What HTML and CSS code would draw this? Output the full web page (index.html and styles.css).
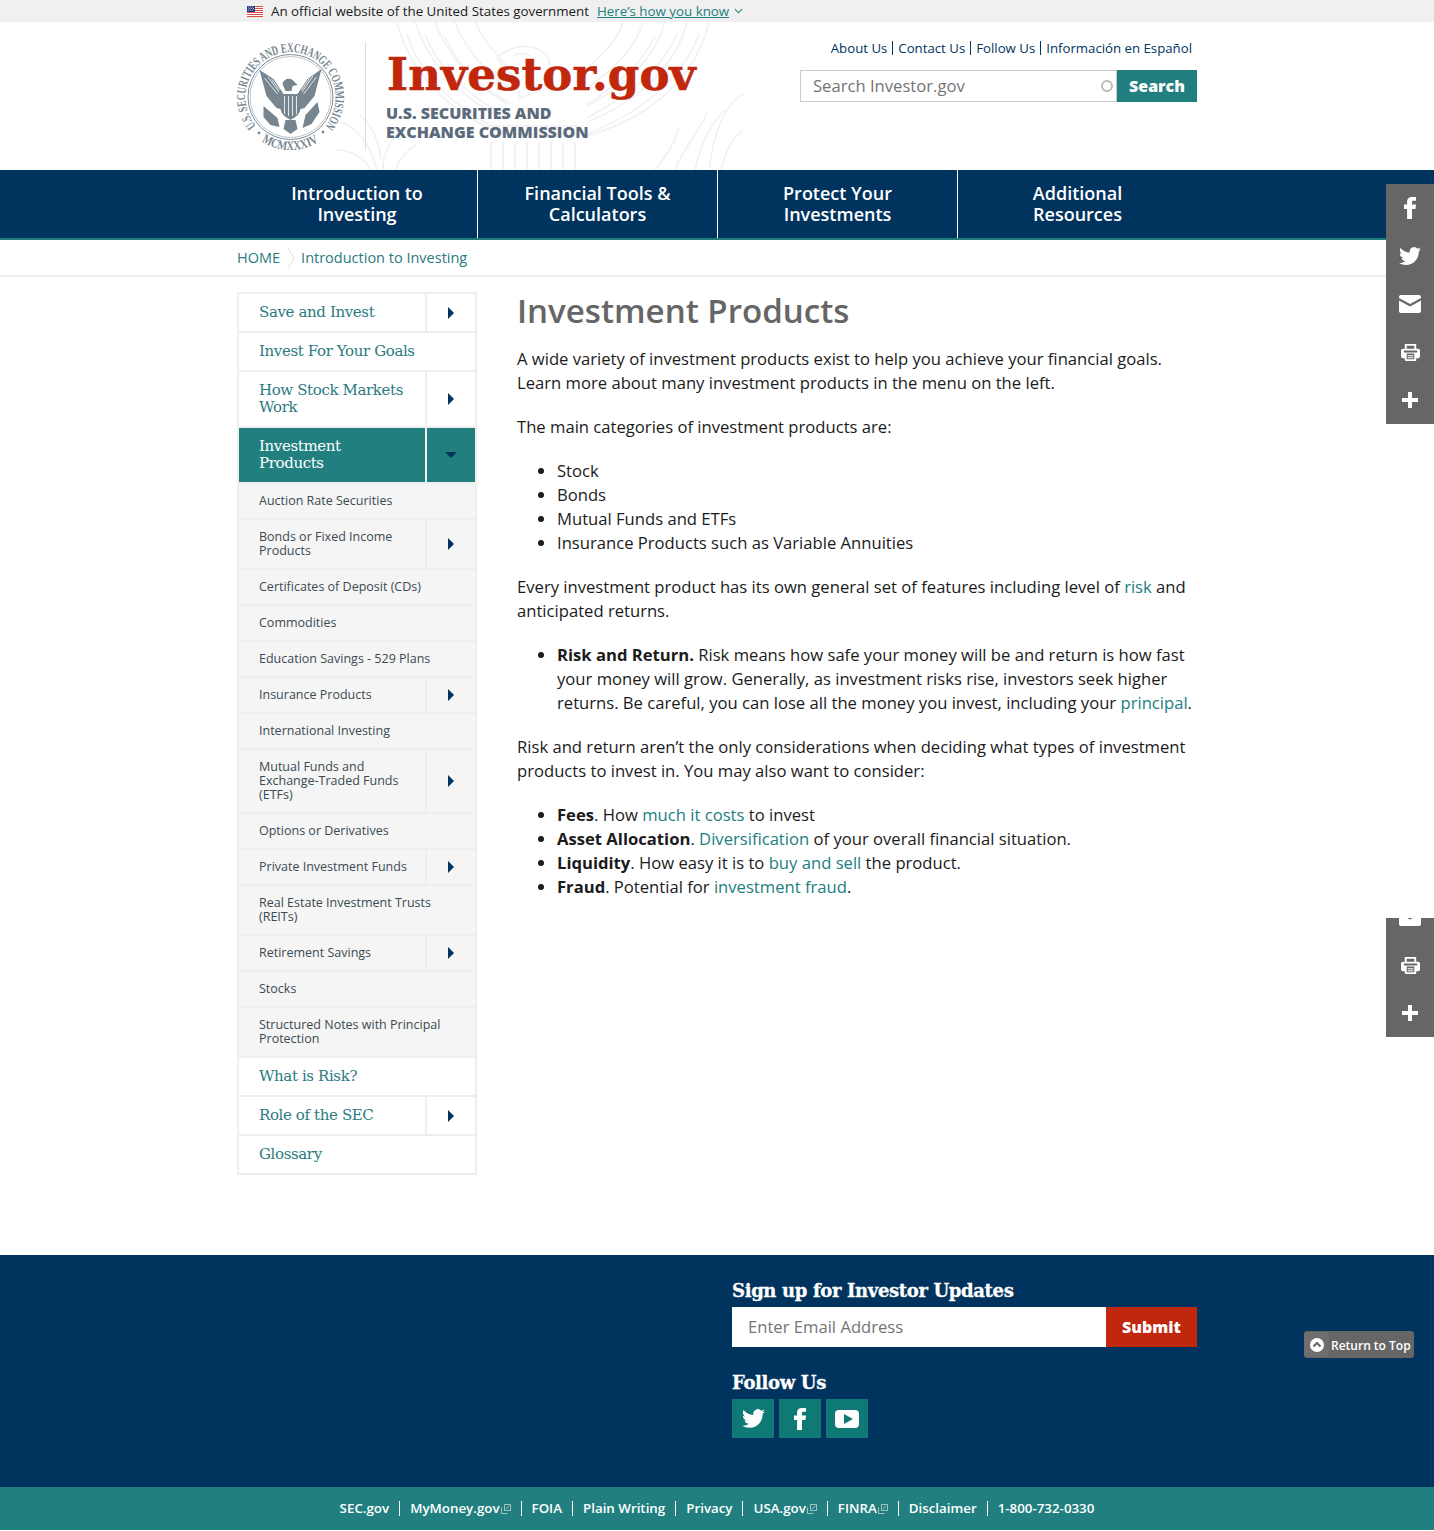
FILE: index.html
```html
<!DOCTYPE html>
<html lang="en">
<head>
<meta charset="utf-8">
<title>Investment Products | Investor.gov</title>
<link rel="stylesheet" href="styles.css">
</head>
<body>
<div class="gov-banner"><div class="wrap gov-inner">
  <svg class="flag" viewBox="0 0 16 11" width="16" height="11"><rect width="16" height="11" fill="#fff"/><path d="M0 .5h16M0 2.5h16M0 4.5h16M0 6.5h16M0 8.5h16M0 10.5h16" stroke="#d83933" stroke-width=".9"/><rect width="8" height="6" fill="#2b3f8c"/><path d="M1 1h1M3 1h1M5 1h1M2 2.5h1M4 2.5h1M6 2.5h1M1 4h1M3 4h1M5 4h1" stroke="#fff" stroke-width=".6"/></svg>
  <span class="gov-text">An official website of the United States government</span>
  <a class="gov-link" href="#">Here’s how you know</a>
  <svg class="chev" viewBox="0 0 10 6" width="9" height="6"><path d="M1 1l4 4 4-4" fill="none" stroke="#21807f" stroke-width="1.2"/></svg>
</div></div>

<header class="site-header"><div class="wrap header-inner">
  <svg class="watermark" viewBox="0 0 410 148" width="410" height="148" aria-hidden="true">
    <g fill="none" stroke="#eff1f2" stroke-width="1.6">
      <path d="M60 0c10 40 40 85 105 112M78 0c12 36 38 72 90 98M98 0c10 28 32 58 72 82M118 0c8 22 26 46 54 66M138 0c6 14 18 30 36 48"/>
      <path d="M70 12c10 34 40 72 100 100M88 12c10 28 36 58 84 84M108 14c8 22 28 46 66 68"/>
      <path d="M372 0c-10 44-46 92-122 114M350 0c-10 38-40 76-100 100M328 0c-8 30-32 60-78 84M306 0c-6 22-24 44-56 66M286 0c-4 14-16 30-36 46"/>
      <path d="M362 12c-12 34-46 74-112 100M340 12c-12 28-40 58-90 84M318 14c-10 22-32 46-68 68"/>
      <path d="M160 36c10-10 26-14 38-10 10 3 15 10 15 20l-6 22-24 8-4-20-10-8-9-12z"/>
      <path d="M176 34c6-3 12-3 18 0"/>
      <path d="M150 104h96M150 112h96"/>
      <path d="M154 120v28M166 120v28M178 120v28M190 120v28M202 120v28M214 120v28M226 120v28M238 120v28"/>
      <path d="M4 100c16 6 30 22 36 48M22 92c10 8 20 24 22 46M0 128c14 0 26 8 34 20M62 110c-10 10-16 24-16 38M80 122c-10 6-18 16-22 26"/>
      <path d="M406 72c-16 10-28 30-34 76M388 88c-12 12-24 32-30 60M370 90c-6 18-24 36-32 58M342 106c-4 14-14 30-24 42M406 108c-10 8-18 22-22 40"/>
    </g>
  </svg>
  <a class="brand" href="#">
    <svg class="seal" viewBox="0 0 110 112" width="110" height="112" role="img" aria-label="SEC seal">
      <defs>
        <path id="arc-top" d="M19 86A45 45 0 1 1 88 86"/>
        <path id="arc-bot" d="M24.600 101.400A53 53 0 0 0 82.400 101.400"/>
      </defs>
      <text class="seal-text"><textPath href="#arc-top" textLength="204" lengthAdjust="spacingAndGlyphs">U.S. SECURITIES AND EXCHANGE COMMISSION</textPath></text>
      <text class="seal-text seal-year"><textPath href="#arc-bot" textLength="60" lengthAdjust="spacingAndGlyphs">MCMXXXIV</textPath></text>
      <circle cx="53.5" cy="57" r="42.5" fill="none" stroke="#7d8b95" stroke-width="1"/>
      <circle cx="53.5" cy="57" r="40.5" fill="none" stroke="#7d8b95" stroke-width=".5"/>
      <circle cx="22" cy="93" r="1.4" fill="#7d8b95"/>
      <circle cx="86" cy="92" r="1.4" fill="#7d8b95"/>
      <g fill="#76858f" transform="translate(-1.5 0)">
        <path d="M24 30l14 9 10 15 1 16-8-2-10-12z"/>
        <path d="M86 29l-14 10-10 15-1 16 8-2 10-12z"/>
        <path d="M47 44c1-5 8-7 11-3l4 4-5 1-1 5H50z"/>
        <path d="M45 54h20v14c0 6-5 9-10 12-5-3-10-6-10-12z"/>
        <path d="M28 66l14 12 2 9-9-2-7-8zM82 62l-12 13-3 13 9-4 8-12z"/>
        <path d="M50 80h10l2 9-7 5-7-5z"/>
      </g>
      <path d="M47.500 56v18M51.500 56v20M55.500 56v20M59.500 56v18M27.500 38l13 16M31 37l11 15M34.500 39l8 11M79.500 37l-13 17M76 36l-11 16M72.500 38l-8 12" stroke="#fff" stroke-width=".8"/>
    </svg>
    <span class="brand-rule"></span>
    <span class="brand-words">
      <span class="brand-name">Investor.gov</span>
      <span class="brand-sub">U.S. SECURITIES AND<br>EXCHANGE COMMISSION</span>
    </span>
  </a>
  <div class="tools">
    <nav class="top-links">
      <a href="#">About Us</a><a href="#">Contact Us</a><a href="#">Follow Us</a><a href="#">Información en Español</a>
    </nav>
    <form class="search">
      <div class="search-box"><span class="search-ph">Search Investor.gov</span><span class="search-ring"></span></div>
      <span class="search-btn">Search</span>
    </form>
  </div>
</div></header>

<nav class="main-nav"><div class="wrap nav-row">
  <a href="#">Introduction to<br>Investing</a>
  <a href="#">Financial Tools &amp;<br>Calculators</a>
  <a href="#">Protect Your<br>Investments</a>
  <a href="#">Additional<br>Resources</a>
</div></nav>

<div class="crumbs"><div class="wrap crumb-row">
  <a href="#">HOME</a>
  <svg class="crumb-sep" viewBox="0 0 8 22" width="8" height="22"><path d="M1 1l6 10-6 10" fill="none" stroke="#ddd" stroke-width="1"/></svg>
  <a href="#">Introduction to Investing</a>
</div></div>

<main class="wrap page">
  <aside class="side">
    <div class="row"><a class="lbl" href="#">Save and Invest</a><span class="tog"><i class="tri"></i></span></div>
    <div class="row"><a class="lbl" href="#">Invest For Your Goals</a></div>
    <div class="row"><a class="lbl" href="#">How Stock Markets Work</a><span class="tog"><i class="tri"></i></span></div>
    <div class="row active"><a class="lbl" href="#">Investment<br>Products</a><span class="tog"><i class="tri-down"></i></span></div>
    <div class="row sub"><a class="lbl" href="#">Auction Rate Securities</a></div>
    <div class="row sub"><a class="lbl" href="#">Bonds or Fixed Income Products</a><span class="tog"><i class="tri"></i></span></div>
    <div class="row sub"><a class="lbl" href="#">Certificates of Deposit (CDs)</a></div>
    <div class="row sub"><a class="lbl" href="#">Commodities</a></div>
    <div class="row sub"><a class="lbl" href="#">Education Savings - 529 Plans</a></div>
    <div class="row sub"><a class="lbl" href="#">Insurance Products</a><span class="tog"><i class="tri"></i></span></div>
    <div class="row sub"><a class="lbl" href="#">International Investing</a></div>
    <div class="row sub"><a class="lbl" href="#">Mutual Funds and Exchange-Traded Funds (ETFs)</a><span class="tog"><i class="tri"></i></span></div>
    <div class="row sub"><a class="lbl" href="#">Options or Derivatives</a></div>
    <div class="row sub"><a class="lbl" href="#">Private Investment Funds</a><span class="tog"><i class="tri"></i></span></div>
    <div class="row sub"><a class="lbl" href="#">Real Estate Investment Trusts (REITs)</a></div>
    <div class="row sub"><a class="lbl" href="#">Retirement Savings</a><span class="tog"><i class="tri"></i></span></div>
    <div class="row sub"><a class="lbl" href="#">Stocks</a></div>
    <div class="row sub"><a class="lbl" href="#">Structured Notes with Principal Protection</a></div>
    <div class="row"><a class="lbl" href="#">What is Risk?</a></div>
    <div class="row"><a class="lbl" href="#">Role of the SEC</a><span class="tog"><i class="tri"></i></span></div>
    <div class="row"><a class="lbl" href="#">Glossary</a></div>
  </aside>
  <article class="content">
    <h1>Investment Products</h1>
    <p>A wide variety of investment products exist to help you achieve your financial goals. Learn more about many investment products in the menu on the left.</p>
    <p>The main categories of investment products are:</p>
    <ul>
      <li>Stock</li><li>Bonds</li><li>Mutual Funds and ETFs</li><li>Insurance Products such as Variable Annuities</li>
    </ul>
    <p>Every investment product has its own general set of features including level of <a href="#">risk</a> and anticipated returns.</p>
    <ul>
      <li><b>Risk and Return.</b> Risk means how safe your money will be and return is how fast your money will grow. Generally, as investment risks rise, investors seek higher returns. Be careful, you can lose all the money you invest, including your <a href="#">principal</a>.</li>
    </ul>
    <p>Risk and return aren’t the only considerations when deciding what types of investment products to invest in. You may also want to consider:</p>
    <ul>
      <li><b>Fees</b>. How <a href="#">much it costs</a> to invest</li>
      <li><b>Asset Allocation</b>. <a href="#">Diversification</a> of your overall financial situation.</li>
      <li><b>Liquidity</b>. How easy it is to <a href="#">buy and sell</a> the product.</li>
      <li><b>Fraud</b>. Potential for <a href="#">investment fraud</a>.</li>
    </ul>
  </article>
</main>

<footer class="foot">
  <div class="wrap foot-inner"><div class="foot-col">
    <h2>Sign up for Investor Updates</h2>
    <form class="signup"><span class="signup-ph">Enter Email Address</span><span class="signup-btn">Submit</span></form>
    <h2 class="follow">Follow Us</h2>
    <div class="socials">
      <a href="#" aria-label="Twitter"><svg viewBox="0 0 24 24" width="23" height="23"><path class="glyph" d="M23.953 4.57a10 10 0 01-2.825.775 4.958 4.958 0 002.163-2.723c-.951.555-2.005.959-3.127 1.184a4.92 4.92 0 00-8.384 4.482C7.69 8.095 4.067 6.13 1.64 3.162a4.822 4.822 0 00-.666 2.475c0 1.71.87 3.213 2.188 4.096a4.904 4.904 0 01-2.228-.616v.06a4.923 4.923 0 003.946 4.827 4.996 4.996 0 01-2.212.085 4.936 4.936 0 004.604 3.417 9.867 9.867 0 01-6.102 2.105c-.39 0-.779-.023-1.17-.067a13.995 13.995 0 007.557 2.209c9.053 0 13.998-7.496 13.998-13.985 0-.21 0-.42-.015-.63A9.935 9.935 0 0024 4.59z"/></svg></a>
      <a href="#" aria-label="Facebook"><svg viewBox="0 0 24 24" width="24" height="24"><path class="glyph" d="M14 8.500V6.200c0-1 .5-1.400 1.400-1.400H18V1h-4c-3.200 0-4.900 2-4.900 4.800v2.700H6V13h3.100v10H14V13h3.500l.5-4.500z"/></svg></a>
      <a href="#" aria-label="YouTube"><svg viewBox="0 0 26 22" width="26" height="22"><path class="glyph" fill-rule="evenodd" d="M5 2h16a4 4 0 014 4v10a4 4 0 01-4 4H5a4 4 0 01-4-4V6a4 4 0 014-4zm5 4v10l9-5z"/></svg></a>
    </div>
  </div></div>
  <div class="legal">
    <a href="#">SEC.gov</a>
    <a href="#">MyMoney.gov<svg class="ext" viewBox="0 0 10 10" width="10" height="10"><path d="M3.500.5h6v6h-6zM.5 3.500v6h6M5 5l3-3" fill="none" stroke="#b9c9c9" stroke-width=".9"/></svg></a>
    <a href="#">FOIA</a>
    <a href="#">Plain Writing</a>
    <a href="#">Privacy</a>
    <a href="#">USA.gov<svg class="ext" viewBox="0 0 10 10" width="10" height="10"><path d="M3.500.5h6v6h-6zM.5 3.500v6h6M5 5l3-3" fill="none" stroke="#b9c9c9" stroke-width=".9"/></svg></a>
    <a href="#">FINRA<svg class="ext" viewBox="0 0 10 10" width="10" height="10"><path d="M3.500.5h6v6h-6zM.5 3.500v6h6M5 5l3-3" fill="none" stroke="#b9c9c9" stroke-width=".9"/></svg></a>
    <a href="#">Disclaimer</a>
    <a href="#">1-800-732-0330</a>
  </div>
</footer>

<div class="share share-top">
  <span class="sh"><svg viewBox="0 0 24 24" width="24" height="24"><path class="glyph" d="M14 8.500V6.200c0-1 .5-1.400 1.400-1.400H18V1h-4c-3.200 0-4.900 2-4.900 4.800v2.700H6V13h3.100v10H14V13h3.500l.5-4.500z"/></svg></span>
  <span class="sh"><svg viewBox="0 0 24 24" width="22" height="22"><path class="glyph" d="M23.953 4.57a10 10 0 01-2.825.775 4.958 4.958 0 002.163-2.723c-.951.555-2.005.959-3.127 1.184a4.92 4.92 0 00-8.384 4.482C7.69 8.095 4.067 6.13 1.64 3.162a4.822 4.822 0 00-.666 2.475c0 1.71.87 3.213 2.188 4.096a4.904 4.904 0 01-2.228-.616v.06a4.923 4.923 0 003.946 4.827 4.996 4.996 0 01-2.212.085 4.936 4.936 0 004.604 3.417 9.867 9.867 0 01-6.102 2.105c-.39 0-.779-.023-1.17-.067a13.995 13.995 0 007.557 2.209c9.053 0 13.998-7.496 13.998-13.985 0-.21 0-.42-.015-.63A9.935 9.935 0 0024 4.59z"/></svg></span>
  <span class="sh"><svg viewBox="0 0 22 18" width="22" height="18"><path class="glyph" d="M2 0h18a2 2 0 012 2v1l-11 6L0 3V2a2 2 0 012-2zM0 5.500l11 6 11-6V16a2 2 0 01-2 2H2a2 2 0 01-2-2z"/></svg></span>
  <span class="sh"><svg viewBox="0 0 20 20" width="19" height="19"><path class="glyph" fill-rule="evenodd" d="M4 1h12v5h2a2 2 0 012 2v6a2 2 0 01-2 2h-2v3H5l-1-1v-2H2a2 2 0 01-2-2V8a2 2 0 012-2h2zm2 2v3h8V3zm0 8v6h8v-6zm1 2h6v1H7zm0 2h6v1H7zM3 8v2h14V8z"/></svg></span>
  <span class="sh"><svg viewBox="0 0 16 16" width="16" height="16"><path class="glyph" d="M6 0h4v6h6v4h-6v6H6v-6H0V6h6z"/></svg></span>
</div>
<div class="share share-low">
  <span class="sh"><svg viewBox="0 0 22 18" width="22" height="18"><path class="glyph" d="M2 0h18a2 2 0 012 2v1l-11 6L0 3V2a2 2 0 012-2zM0 5.500l11 6 11-6V16a2 2 0 01-2 2H2a2 2 0 01-2-2z"/></svg></span>
  <span class="sh"><svg viewBox="0 0 20 20" width="19" height="19"><path class="glyph" fill-rule="evenodd" d="M4 1h12v5h2a2 2 0 012 2v6a2 2 0 01-2 2h-2v3H5l-1-1v-2H2a2 2 0 01-2-2V8a2 2 0 012-2h2zm2 2v3h8V3zm0 8v6h8v-6zm1 2h6v1H7zm0 2h6v1H7zM3 8v2h14V8z"/></svg></span>
  <span class="sh"><svg viewBox="0 0 16 16" width="16" height="16"><path class="glyph" d="M6 0h4v6h6v4h-6v6H6v-6H0V6h6z"/></svg></span>
</div>
<a class="to-top" href="#"><span class="to-top-ic"><svg viewBox="0 0 14 14" width="14" height="14"><circle cx="7" cy="7" r="7" fill="#fff"/><path d="M3.500 8.500L7 5l3.500 3.500" fill="none" stroke="#666" stroke-width="2"/></svg></span><span class="to-top-txt">Return to Top</span></a>
</body>
</html>
```
FILE: styles.css
```css
* { box-sizing: border-box; }
html, body { margin: 0; padding: 0; }
body { position: relative; min-height: 1531px; background: #fff; color: #1b1b1b; font-family: "Open Sans", sans-serif; font-size: 16.64px; line-height: 24px; }
a { color: #21807f; text-decoration: none; }
.wrap { width: 960px; margin-left: 237px; }
.glyph { fill: #fff; }

.gov-banner { height: 22px; background: #f0f0f0; font-size: 13.33px; line-height: 22px; }
.gov-inner { display: flex; align-items: center; padding-left: 10px; }
.gov-text { margin-left: 8px; }
.gov-link { margin-left: 8px; text-decoration: underline; color: #21807f; }
.chev { margin-left: 5px; }

.site-header { height: 148px; }
.header-inner { position: relative; display: flex; justify-content: space-between; height: 148px; }
.watermark { position: absolute; left: 100px; top: 0; }
.brand { position: relative; display: flex; align-items: flex-start; }
.seal { margin-top: 18px; overflow: visible; }
.seal-text { font-family: "Liberation Serif", serif; font-size: 13px; fill: #76858f; font-weight: 700; }
.brand-rule { width: 1px; height: 108px; margin: 20px 21px 0 18px; background: #ddd; }
.brand-words { display: flex; flex-direction: column; }
.brand-name { margin-top: 26px; font-family: "DejaVu Serif", serif; font-weight: 700; font-size: 45px; line-height: 54px; letter-spacing: .1px; color: #c0270d; -webkit-text-stroke: .6px #c0270d; }
.brand-sub { margin-top: 2px; margin-left: -1px; font-weight: 800; font-size: 16px; line-height: 19px; color: #5b6b7b; }

.tools { position: relative; display: flex; flex-direction: column; align-items: flex-end; }
.top-links { display: flex; margin: 18px 5px 0 0; font-size: 13.22px; line-height: 16px; }
.top-links a { color: #00335d; padding: 0 5px; border-left: 1px solid #00335d; height: 14px; line-height: 14px; margin-top: 1px; }
.top-links a:first-child { border-left: 0; }
.top-links a:last-child { padding-right: 0; }
.search { display: flex; margin-top: 15px; }
.search-box { display: flex; align-items: center; justify-content: space-between; width: 317px; height: 32px; padding: 0 3px 0 12px; background: #fff; border: 1px solid #ccc; }
.search-ph { font-size: 16.64px; color: #757575; }
.search-ring { width: 12px; height: 12px; border: 2px solid #bbb; border-radius: 50%; }
.search-btn { width: 80px; height: 32px; background: #21807f; color: #fff; font-weight: 800; font-size: 16px; line-height: 32px; text-align: center; }

.main-nav { height: 70px; background: #00335d; border-bottom: 2px solid #21807f; }
.nav-row { display: grid; grid-template-columns: 241px 240px 240px 239px; height: 68px; }
.nav-row a { display: flex; align-items: center; justify-content: center; text-align: center; color: #fff; font-size: 18px; font-weight: 600; line-height: 21px; border-right: 1px solid #fff; }
.nav-row a:last-child { border-right: 0; }

.crumbs { height: 37px; border-bottom: 2px solid #eee; }
.crumb-row { display: flex; align-items: center; height: 35px; font-size: 14.5px; gap: 6.5px; }
.crumb-row a { color: #2a7a80; }

.page { display: flex; gap: 40px; padding-top: 15px; align-items: flex-start; height: 978px; }
.side { flex: none; width: 240px; padding: 2px 2px 0; background: #eee; }
.row { display: flex; margin-bottom: 2px; background: #fff; min-height: 37px; }
.row .lbl { flex: 1; padding: 10px 20px; font-family: "DejaVu Serif", serif; font-size: 15px; line-height: 17px; letter-spacing: -.38px; color: #2a7a80; }
.tog { flex: none; display: flex; align-items: center; justify-content: center; width: 50px; border-left: 2px solid #eee; }
.tri { width: 0; height: 0; border-left: 6px solid #00335d; border-top: 6px solid transparent; border-bottom: 6px solid transparent; }
.tri-down { width: 0; height: 0; border-top: 6px solid #00335d; border-left: 6px solid transparent; border-right: 6px solid transparent; }
.row.active { background: #21807f; }
.row.active .lbl { color: #fff; }
.row.sub { background: #f5f5f5; min-height: 34px; }
.row.sub .lbl { padding: 10px 12px 10px 20px; font-family: "Open Sans", sans-serif; font-size: 12.5px; line-height: 14px; letter-spacing: 0; color: #3b4a52; }

.content { width: 680px; }
.content h1 { margin: -1px 0 16px; font-size: 33.1px; line-height: 40px; font-weight: 600; color: #666; }
.content p { margin: 0 0 20px; }
.content ul { margin: 0 0 20px; padding-left: 40px; }
.content a { color: #21807f; }

.foot { background: #00335d; }
.foot-inner { height: 232px; padding: 23px 0 0 495px; }
.foot-col h2 { margin: 0; font-family: "DejaVu Serif", serif; font-weight: 700; font-size: 18px; line-height: 26px; letter-spacing: -.35px; color: #fff; -webkit-text-stroke: .3px #fff; }
.signup { display: flex; height: 40px; margin-top: 3px; }
.signup-ph { flex: 1; background: #fff; padding-left: 16px; font-size: 16.64px; line-height: 40px; color: #757575; }
.signup-btn { width: 91px; background: #c0270d; color: #fff; font-weight: 800; font-size: 16px; line-height: 40px; text-align: center; }
.foot-col .follow { margin-top: 23px; }
.socials { display: flex; gap: 5px; margin-top: 3px; }
.socials a { display: flex; align-items: center; justify-content: center; width: 42px; height: 39px; background: #0f7a75; }
.legal { display: flex; justify-content: center; align-items: center; height: 43px; background: #21807f; font-size: 13.33px; font-weight: 600; }
.legal a { color: #fff; padding: 0 10px; border-left: 1px solid #fff; line-height: 15px; }
.legal a:first-child { border-left: 0; }
.ext { margin-left: 1px; vertical-align: -1px; }

.share { position: absolute; right: 0; width: 48px; background: #666; display: flex; flex-direction: column; align-items: center; overflow: hidden; }
.share-top { top: 184px; height: 240px; }
.share-low { top: 918px; height: 119px; justify-content: flex-end; }
.sh { flex: none; display: flex; align-items: center; justify-content: center; width: 48px; height: 48px; }
.to-top { position: absolute; left: 1304px; top: 1331px; display: flex; align-items: center; width: 110px; height: 27px; background: #666; border-radius: 3px; color: #fff; font-size: 12px; font-weight: 600; }
.to-top-ic { flex: none; display: flex; align-items: center; justify-content: center; width: 25px; height: 25px; margin-right: 2px; background: #6f6f6f; border-radius: 3px; }
.to-top-txt { padding-top: 2px; }
```
